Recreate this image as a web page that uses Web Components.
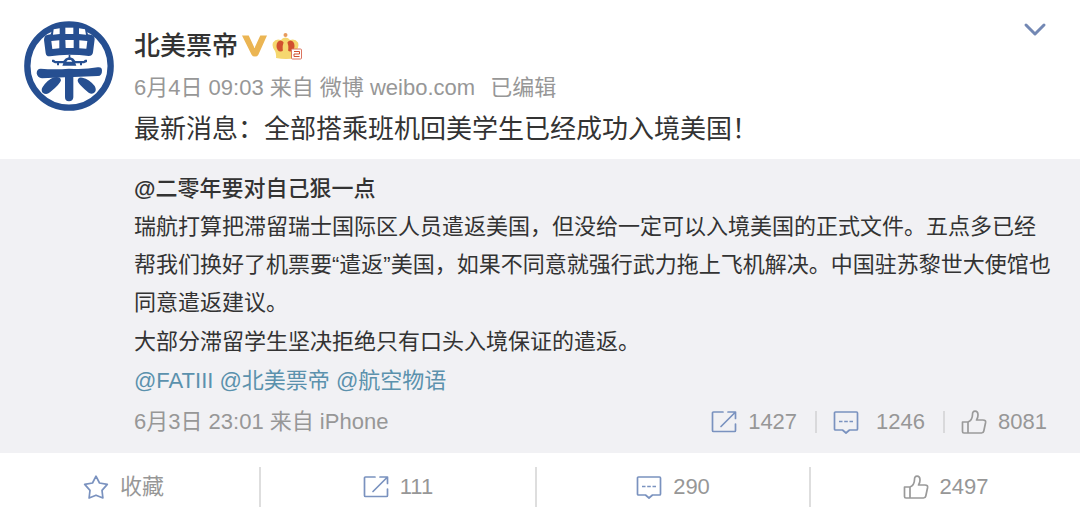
<!DOCTYPE html>
<html lang="zh-CN">
<head>
<meta charset="utf-8">
<meta name="viewport" content="width=device-width, initial-scale=1">
<title>北美票帝 - 微博</title>
<style>
html, body { margin: 0; background: #fff; }
body { font-family: "Liberation Sans", "Noto Sans CJK SC", sans-serif; color: #333; }
</style>
</head>
<body>
<weibo-post></weibo-post>

<script>
const ICONS = {
  share: '<g stroke="#7a92bf"><path d="M12 2H2.500Q1.500 2 1.500 3V20.500Q1.500 21.500 2.500 21.500H23.500Q24.500 21.500 24.500 20.500V14"/><path d="M10 16.500 24 2.500M17 2H24.500V8.500"/></g>',
  comment: '<g stroke="#7a92bf"><path d="M2.500 2H23.500Q24.500 2 24.500 3V19Q24.500 20 23.500 20H16.500L13 23 9.500 20H2.500Q1.500 20 1.500 19V3Q1.500 2 2.500 2Z"/><path stroke-linecap="butt" d="M6 11.500H9.500M11.200 11.500H14.800M16.500 11.500H20"/></g>',
  like: '<g stroke="#9a9a9a"><path d="M1.500 12H7V23H3Q1.500 23 1.500 21.500ZM7 12Q11.500 10 11.500 4.500Q11.500 1.200 14 1.200Q17 1.200 17 5Q17 8 15.500 10H22Q25 10 24.600 12.500L22.800 21Q22.400 23 20.500 23H7"/></g>',
  star: '<path stroke="#7a92bf" d="M13 1.200 16.500 8 24.300 9.400 19 15.400 19.900 23 13 20.200 6.100 23 7 15.400 1.700 9.400 9.500 8Z"/>'
};

class PostIcon extends HTMLElement {
  connectedCallback() {
    this.attachShadow({ mode: 'open' }).innerHTML = `
      <style>
        :host { display: block; flex: none; width: 26px; height: 24px; }
        svg { display: block; width: 100%; height: 100%; }
      </style>
      <svg viewBox="0 0 26 24" fill="none" stroke-width="1.700" stroke-linejoin="round" stroke-linecap="round" aria-hidden="true">${ICONS[this.getAttribute('name')]}</svg>`;
  }
}

class PostAvatar extends HTMLElement {
  connectedCallback() {
    this.attachShadow({ mode: 'open' }).innerHTML = `
      <style>
        :host { display: block; width: 90px; height: 90px; }
        svg { display: block; width: 100%; height: 100%; }
      </style>
      <svg viewBox="42 33 270 270" role="img" aria-label="头像">
        <circle cx="177" cy="168" r="125" fill="#fff" stroke="#264f91" stroke-width="19"/>
        <g fill="#264f91">
          <path d="M114 74 122 73 130 48H226L234 73 242 74Q254 75 254 88L249 127Q248 138 236 138Q210 134 178 134Q146 134 120 139Q108 140 107 129L102 90Q102 75 114 74Z"/>
          <path d="M92 176Q135 180 177 176Q220 180 263 172Q276 170 276 182Q276 197 264 198L190 201V262Q189 274 177 274Q165 274 165 262V202L96 205Q82 204 80 190Q80 176 92 176Z"/>
          <path d="M132 202Q151 198 153 211Q151 222 120 247Q109 256 98 248Q92 241 98 231Q113 209 132 202Z"/>
          <path d="M217 203Q203 200 203 213Q204 222 236 248Q247 255 255 246Q260 239 254 228Q238 207 217 203Z"/>
          <path d="M126 149H132L136 153H160Q166 144 176 142V134H181V142Q191 144 196 153H221L225 149H231V156L222 160H216V166H210V160H196L199 167H157L160 160H147V166H141V160H135L126 155Z"/>
        </g>
        <g fill="#fff">
          <path d="M131 58 149 55V72L129 74Z"/>
          <path d="M166 53H190V72H166Z"/>
          <path d="M207 55 225 58 228 74 207 72Z"/>
          <path d="M124 93 148 91V115L127 117Z"/>
          <path d="M166 90H191V114H167Z"/>
          <path d="M208 91 232 93 229 116 208 115Z"/>
          <path d="M169 155H187L183 150H173Z"/>
        </g>
      </svg>`;
  }
}

class PostBadges extends HTMLElement {
  connectedCallback() {
    this.attachShadow({ mode: 'open' }).innerHTML = `
      <style>
        :host { display: flex; align-items: center; gap: 5px; }
        svg { display: block; }
      </style>
      <svg width="25" height="24" viewBox="0 0 26 24" role="img" aria-label="认证">
        <path d="M0 1H7L13 14 19 1H26L17 21Q16 23 13.500 23Q11 23 10 21Z" fill="#ebb553"/>
      </svg>
      <svg width="31" height="28" viewBox="3 0 31 28" role="img" aria-label="会员等级 2">
        <circle cx="16.500" cy="3" r="2" fill="#e79a5b"/>
        <path d="M7 26Q7.500 22 6 19Q2.500 15 4 10.500Q7 6 12 8Q13.500 5.500 16.500 5.500Q19.500 5.500 21 8Q26 6 29 10.500Q30.500 15 27 19V26Q17 28 7 26Z" fill="#f5d76f"/>
        <ellipse cx="11.500" cy="14" rx="4" ry="5.500" fill="#d1502f"/>
        <ellipse cx="21.500" cy="14" rx="4" ry="5.500" fill="#d1502f"/>
        <path d="M14.500 21Q12 13 16.500 8Q21 13 18.500 21Z" fill="#f5d76f"/>
        <rect x="22.500" y="17" width="10" height="10" rx="1" fill="#fff" stroke="#dc7560"/>
        <path d="M25 19.500H30.500V22H25V24.500H30.500" fill="none" stroke="#d1502f"/>
      </svg>`;
  }
}

class PostAction extends HTMLElement {
  connectedCallback() {
    this.attachShadow({ mode: 'open' }).innerHTML = `
      <style>
        :host { display: flex; align-items: center; justify-content: center; }
        button {
          display: flex; align-items: center; gap: var(--action-gap, 11px);
          margin: 0; padding: 0; border: 0; background: none;
          font: inherit; color: inherit; line-height: 32px; white-space: nowrap; cursor: pointer;
        }
      </style>
      <button type="button"><post-icon name="${this.getAttribute('icon')}"></post-icon><slot></slot></button>`;
  }
}

class QuotedPost extends HTMLElement {
  connectedCallback() {
    this.attachShadow({ mode: 'open' }).innerHTML = `
      <style>
        :host { display: block; background: #f1f1f4; padding: 11px 26px 10px 134px; font-size: 22px; line-height: 38px; }
        h2, p { margin: 0; font-size: inherit; }
        h2 { font-weight: 500; color: #333; }
        b { font-weight: 700; }
        p + p { margin-top: 1px; }
        a { color: #5b91ad; text-decoration: none; }
        footer { display: flex; justify-content: space-between; align-items: center; padding-right: 7px; line-height: 43px; color: #979797; }
        .actions { display: flex; align-items: center; }
        post-action + post-action { margin-left: 18px; padding-left: 18px; background: linear-gradient(#d9d9db, #d9d9db) left center / 2px 22px no-repeat; }
        .wide { --action-gap: 17px; }
      </style>
      <h2><b>@</b>二零年要对自己狠一点</h2>
      <p>瑞航打算把滞留瑞士国际区人员遣返美国，但没给一定可以入境美国的正式文件。五点多已经帮我们换好了机票要“遣返”美国，如果不同意就强行武力拖上飞机解决。中国驻苏黎世大使馆也同意遣返建议。</p>
      <p>大部分滞留学生坚决拒绝只有口头入境保证的遣返。</p>
      <p><a href="#fatiii">@FATIII</a> <a href="#beimei">@北美票帝</a> <a href="#hangkong">@航空物语</a></p>
      <footer>
        <span>6月3日 23:01 来自 iPhone</span>
        <div class="actions">
          <post-action icon="share">1427</post-action>
          <post-action icon="comment" class="wide">1246</post-action>
          <post-action icon="like">8081</post-action>
        </div>
      </footer>`;
  }
}

class WeiboPost extends HTMLElement {
  connectedCallback() {
    this.attachShadow({ mode: 'open' }).innerHTML = `
      <style>
        :host { display: block; }
        header { display: grid; grid-template-columns: 90px 1fr auto; column-gap: 20px; padding: 21px 33px 6px 24px; }
        .name { display: flex; align-items: center; gap: 4px; height: 50px; }
        h1, p { margin: 0; }
        h1 { font-size: 26px; line-height: 50px; font-weight: 500; }
        .meta { font-size: 22px; line-height: 34px; color: #979797; }
        .meta span + span { margin-left: 15px; }
        .text { font-size: 26px; line-height: 48px; color: #333; }
        .more { align-self: start; margin: 0; padding: 0; border: 0; background: none; cursor: pointer; }
        .more svg { display: block; }
        .bar { display: grid; grid-template-columns: 261fr 276fr 274fr 269fr; padding: 14px 0 8px; font-size: 22px; color: #979797; }
        .bar post-action { height: 40px; box-sizing: border-box; border-right: 2px solid #dedede; }
        .bar post-action:first-child { padding-right: 12px; }
        .bar post-action:last-child { border-right: 0; }
      </style>
      <article>
        <header>
          <post-avatar></post-avatar>
          <div>
            <div class="name"><h1>北美票帝</h1><post-badges></post-badges></div>
            <p class="meta"><span>6月4日 09:03 来自 微博 weibo.com</span><span>已编辑</span></p>
            <p class="text">最新消息：全部搭乘班机回美学生已经成功入境美国！</p>
          </div>
          <button class="more" type="button" aria-label="更多">
            <svg width="24" height="16" viewBox="0 0 24 16" fill="none" stroke="#7388b4" stroke-width="3" stroke-linecap="round" stroke-linejoin="round"><path d="M3 4 12 13 21 4"/></svg>
          </button>
        </header>
        <quoted-post></quoted-post>
        <div class="bar">
          <post-action icon="star">收藏</post-action>
          <post-action icon="share">111</post-action>
          <post-action icon="comment">290</post-action>
          <post-action icon="like">2497</post-action>
        </div>
      </article>`;
  }
}

customElements.define('post-icon', PostIcon);
customElements.define('post-avatar', PostAvatar);
customElements.define('post-badges', PostBadges);
customElements.define('post-action', PostAction);
customElements.define('quoted-post', QuotedPost);
customElements.define('weibo-post', WeiboPost);
</script>
</body>
</html>
